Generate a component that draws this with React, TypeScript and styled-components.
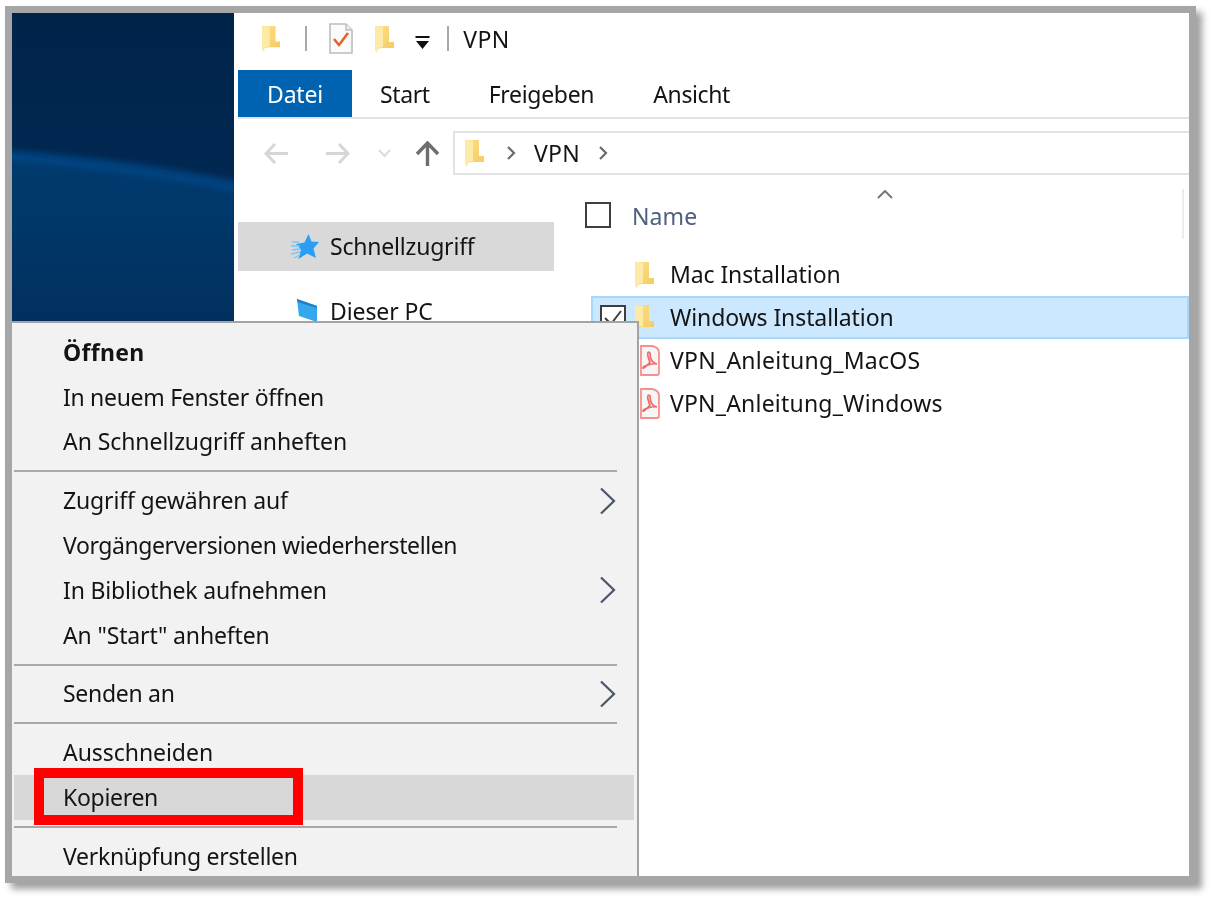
import React from "react";
import styled, { createGlobalStyle } from "styled-components";

const Global = createGlobalStyle`
  html, body { margin: 0; padding: 0; background: #ffffff; }
  body { width: 1211px; height: 899px; overflow: hidden; font-family: "Noto Sans", "Open Sans", sans-serif; }
`;

const Page = styled.div`
  padding: 6px 0 0 5px;
`;

const Frame = styled.div`
  position: relative;
  box-sizing: border-box;
  width: 1191px;
  height: 877px;
  border: 7px solid #a6a6a6;
  display: flex;
  background: #ffffff;
  box-shadow: 6px 6px 7px rgba(0, 0, 0, 0.38);
`;

const Wallpaper = styled.div`
  width: 222px;
  flex: none;
  height: 310px;
  filter: blur(0.5px);
`;

const WallpaperArt = styled.svg`
  display: block;
  width: 100%;
  height: 100%;
`;

const Explorer = styled.div`
  flex: 1;
  min-width: 0;
  display: flex;
  flex-direction: column;
`;

const Label = styled.span<{ $spacing?: number; $color?: string; $bold?: boolean }>`
  font-size: 23px;
  letter-spacing: ${(p) => p.$spacing ?? -0.2}px;
  color: ${(p) => p.$color ?? "#141414"};
  font-weight: ${(p) => (p.$bold ? 700 : 400)};
  white-space: nowrap;
  line-height: 1;
  filter: blur(0.5px);
`;

const TitleBar = styled.div`
  height: 57px;
  display: flex;
  align-items: center;
  padding-left: 28px;
  padding-bottom: 6px;
  box-sizing: border-box;
`;

const TitleText = styled(Label)`
  margin-top: 2px;
`;

const QuickSep = styled.div<{ $left: number; $right: number }>`
  width: 2px;
  height: 25px;
  background: #a8a8a8;
  margin: 0 ${(p) => p.$right}px 0 ${(p) => p.$left}px;
  filter: blur(0.4px);
`;

const IconSlot = styled.span<{ $left?: number; $right?: number; $top?: number }>`
  display: inline-flex;
  flex: none;
  margin-left: ${(p) => p.$left ?? 0}px;
  margin-right: ${(p) => p.$right ?? 0}px;
  margin-top: ${(p) => p.$top ?? 0}px;
  filter: blur(0.5px);
`;

const Tabs = styled.div`
  height: 47px;
  margin-left: 4px;
  display: flex;
  border-bottom: 2px solid #e3e3e3;
`;

const FileTab = styled.div`
  width: 114px;
  background: #0063b1;
  display: flex;
  align-items: center;
  justify-content: center;
  padding-top: 2px;
  box-sizing: border-box;
`;

const Tab = styled.div<{ $left: number }>`
  margin-left: ${(p) => p.$left}px;
  padding-top: 2px;
  display: flex;
  align-items: center;
`;

const AddressRow = styled.div`
  margin-top: 12px;
  height: 44px;
  display: flex;
  align-items: center;
  padding-left: 30px;
  box-sizing: border-box;
`;

const AddressBox = styled.div`
  margin-left: 13px;
  flex: 1;
  height: 44px;
  box-sizing: border-box;
  border: 2px solid #e3e3e3;
  border-right: none;
  display: flex;
  align-items: center;
  padding-left: 10px;
`;

const AddressText = styled(Label)`
  margin-left: 18px;
`;

const Body = styled.div`
  flex: 1;
  display: flex;
  min-height: 0;
`;

const Sidebar = styled.div`
  width: 321px;
  flex: none;
  box-sizing: border-box;
  padding: 47px 1px 0 4px;
`;

const NavItem = styled.div<{ $active?: boolean }>`
  height: 49px;
  margin-bottom: 16px;
  display: flex;
  align-items: center;
  background: ${(p) => (p.$active ? "#d9d9d9" : "transparent")};
  padding-left: 53px;
`;

const Content = styled.div`
  flex: 1;
  min-width: 0;
  position: relative;
  padding-left: 36px;
  padding-top: 14px;
`;

const ColumnHeader = styled.div`
  height: 64px;
  display: flex;
  position: relative;
`;

const Check = styled.div<{ $checked?: boolean }>`
  width: 26px;
  height: 26px;
  box-sizing: border-box;
  border: 2px solid #3f3f3f;
  background: ${(p) => (p.$checked ? "#ffffff" : "transparent")};
  display: flex;
  align-items: center;
  justify-content: center;
  filter: blur(0.4px);
`;

const HeaderCheck = styled(Check)`
  margin: 13px 0 0 -6px;
`;

const HeaderName = styled.div`
  margin: 16px 0 0 21px;
`;

const SortCaret = styled.span`
  position: absolute;
  left: 286px;
  top: 1px;
  display: flex;
  filter: blur(0.4px);
`;

const ColumnDivider = styled.div`
  position: absolute;
  right: 5px;
  top: 0;
  width: 2px;
  height: 50px;
  background: #ececec;
`;

const FileRow = styled.div<{ $selected?: boolean }>`
  height: 43px;
  box-sizing: border-box;
  display: grid;
  grid-template-columns: 44px 35px 1fr;
  align-items: center;
  background: ${(p) => (p.$selected ? "#cce8ff" : "transparent")};
  box-shadow: ${(p) => (p.$selected ? "inset 0 0 0 2px #a6d8ff" : "none")};
`;

const RowCheck = styled(Check)`
  margin-left: 9px;
  margin-top: 1px;
`;

const Menu = styled.div`
  position: absolute;
  left: 0;
  top: 308px;
  width: 627px;
  height: 555px;
  box-sizing: border-box;
  background: #f2f2f2;
  border-top: 2px solid #a3a3a3;
  border-right: 2px solid #a3a3a3;
  padding: 7px 0 0 2px;
  overflow: hidden;
`;

const MenuItem = styled.div<{ $active?: boolean }>`
  height: 44.8px;
  display: flex;
  align-items: center;
  justify-content: space-between;
  box-sizing: border-box;
  padding: 0 18px 0 49px;
  margin-right: 3px;
  background: ${(p) => (p.$active ? "#d8d8d8" : "transparent")};
`;

const MenuSep = styled.div`
  height: 2px;
  margin: 6px 20px 6px 0;
  background: #a9a9a9;
  filter: blur(0.3px);
`;

const RedBox = styled.div`
  position: absolute;
  left: 22px;
  top: 755px;
  width: 269px;
  height: 57px;
  box-sizing: border-box;
  border: 10px solid #ff0000;
`;

const Folder = ({ h = 28 }: { h?: number }) => (
  <svg width={(h * 19) / 28} height={h} viewBox="0 0 19 28">
    <defs>
      <linearGradient id="folderBody" x1="0" y1="0" x2="1" y2="1">
        <stop offset="0" stopColor="#fbe08a" />
        <stop offset="1" stopColor="#f6cb60" />
      </linearGradient>
    </defs>
    <path d="M1 1 H14 V17 H19 V23 H7 L1 24 Z" fill="url(#folderBody)" />
    <path d="M0 0.5 L8 2 V22 L3 23 L2 28 L0 25 Z" fill="#fdeaa6" />
  </svg>
);

const ChecklistPage = () => (
  <svg width="24" height="31" viewBox="0 0 24 31">
    <path d="M1 1 H17 L23 7 V30 H1 Z" fill="#fbfbfb" stroke="#bdbdbd" strokeWidth="1.6" />
    <path d="M17 1 V7 H23" fill="#eeeeee" stroke="#bdbdbd" strokeWidth="1.4" />
    <path d="M5 16 L10 22 L19 10" fill="none" stroke="#e8622c" strokeWidth="2.6" />
  </svg>
);

const QuickDrop = () => (
  <svg width="15" height="13" viewBox="0 0 15 13">
    <rect x="0.5" y="0" width="14" height="2" fill="#111" />
    <path d="M1 5 H14 L7.5 13 Z" fill="#111" />
  </svg>
);

const Arrow = ({ dir, color, w = 25 }: { dir: "l" | "r" | "u"; color: string; w?: number }) => (
  <svg width={w} height={w} viewBox="0 0 25 25" fill="none" stroke={color} strokeWidth="3">
    {dir === "l" && <path d="M24 12.5 H2 M11 3 L2 12.5 L11 22" />}
    {dir === "r" && <path d="M1 12.5 H23 M14 3 L23 12.5 L14 22" />}
    {dir === "u" && <path d="M12.5 25 V3 M2 13 L12.5 2 L23 13" strokeWidth="3.4" />}
  </svg>
);

const SmallChevron = ({ color = "#dcdcdc" }: { color?: string }) => (
  <svg width="13" height="9" viewBox="0 0 13 9" fill="none" stroke={color} strokeWidth="2">
    <path d="M1 1 L6.5 7 L12 1" />
  </svg>
);

const Crumb = () => (
  <svg width="10" height="16" viewBox="0 0 10 16" fill="none" stroke="#6a6a6a" strokeWidth="2.2">
    <path d="M2 2 L8 8 L2 14" />
  </svg>
);

const Star = () => (
  <svg width="28" height="26" viewBox="0 0 28 26">
    <path d="M17.5 0 L20.5 7.5 L28 8 L22.5 14.5 L25 24 L16 19.5 L7.5 25 L10 15.5 L5 10 L13.5 8.5 Z" fill="#2a9df4" />
    <path d="M1 8 L8 8 M0 12 L9 12 M1 16 L9 15 M0 20 L9 18 M3 24 L9 21" stroke="#7cc4f7" strokeWidth="1.3" />
  </svg>
);

const Monitor = () => (
  <svg width="24" height="26" viewBox="0 0 24 26">
    <path d="M3 0 L23 7 V23 L5 17 Z" fill="#35a7ee" />
    <path d="M3 0 L23 7 V9 L3.5 3 Z" fill="#1e7fc6" />
    <path d="M0 24 H20" stroke="#c8c8c8" strokeWidth="2" />
  </svg>
);

const PdfIcon = () => (
  <svg width="20" height="31" viewBox="0 0 20 31">
    <path d="M1 1 H12 Q19 2 19 8 V28 Q19 30 17 30 H1 Z" fill="#f6f6f6" stroke="#f78f8f" strokeWidth="1.8" />
    <path
      d="M9 7 C6 7 9 15 10 17 C7 21 3 24 3 23 C3 21 12 18 17 19 C12 18 10 13 10 8 Z"
      fill="none"
      stroke="#f06a6a"
      strokeWidth="1.7"
    />
  </svg>
);

const Submenu = () => (
  <svg width="17" height="28" viewBox="0 0 17 28" fill="none" stroke="#4a5568" strokeWidth="2.2">
    <path d="M2 1.5 L15 14 L2 26.5" />
  </svg>
);

type Entry = { label: string; spacing: number; bold?: boolean; sub?: boolean; active?: boolean };

const menuGroups: Entry[][] = [
  [
    { label: "Öffnen", bold: true, spacing: 0.3 },
    { label: "In neuem Fenster öffnen", spacing: -0.3 },
    { label: "An Schnellzugriff anheften", spacing: -0.07 },
  ],
  [
    { label: "Zugriff gewähren auf", sub: true, spacing: -0.15 },
    { label: "Vorgängerversionen wiederherstellen", spacing: -0.41 },
    { label: "In Bibliothek aufnehmen", sub: true, spacing: -0.17 },
    { label: 'An "Start" anheften', spacing: -0.15 },
  ],
  [{ label: "Senden an", sub: true, spacing: -0.3 }],
  [
    { label: "Ausschneiden", spacing: -0.05 },
    { label: "Kopieren", active: true, spacing: -0.3 },
  ],
  [{ label: "Verknüpfung erstellen", spacing: -0.3 }],
];

const files = [
  { name: "Mac Installation", kind: "folder", spacing: -0.1 },
  { name: "Windows Installation", kind: "folder", selected: true, spacing: -0.1 },
  { name: "VPN_Anleitung_MacOS", kind: "pdf", spacing: 0.25 },
  { name: "VPN_Anleitung_Windows", kind: "pdf", spacing: 0.2 },
];

export default function App() {
  return (
    <Page>
      <Global />
      <Frame>
        <Wallpaper>
          <WallpaperArt viewBox="0 0 222 310" preserveAspectRatio="none">
            <defs>
              <linearGradient id="sky" x1="0" y1="0" x2="0" y2="1">
                <stop offset="0" stopColor="#01234a" />
                <stop offset="1" stopColor="#012c58" />
              </linearGradient>
              <linearGradient id="sea" x1="0" y1="0" x2="0" y2="1">
                <stop offset="0" stopColor="#013a6e" />
                <stop offset="0.35" stopColor="#00386a" />
                <stop offset="1" stopColor="#02305e" />
              </linearGradient>
              <filter id="soft" x="-10%" y="-100%" width="120%" height="300%">
                <feGaussianBlur stdDeviation="3.5" />
              </filter>
            </defs>
            <rect width="222" height="310" fill="url(#sky)" />
            <path d="M0 142 C70 150 150 160 222 174 V310 H0 Z" fill="url(#sea)" />
            <path
              d="M-5 142 C70 148 150 158 227 174"
              fill="none"
              stroke="#064a8a"
              strokeWidth="8"
              filter="url(#soft)"
            />
          </WallpaperArt>
        </Wallpaper>
        <Explorer>
          <TitleBar>
            <IconSlot>
              <Folder h={27} />
            </IconSlot>
            <QuickSep $left={25} $right={22} />
            <IconSlot $right={22}>
              <ChecklistPage />
            </IconSlot>
            <IconSlot $right={21}>
              <Folder />
            </IconSlot>
            <IconSlot $top={8}>
              <QuickDrop />
            </IconSlot>
            <QuickSep $left={17} $right={14} />
            <TitleText $spacing={0.3}>VPN</TitleText>
          </TitleBar>
          <Tabs>
            <FileTab>
              <Label $color="#ffffff">Datei</Label>
            </FileTab>
            <Tab $left={28}>
              <Label $spacing={-0.4}>Start</Label>
            </Tab>
            <Tab $left={59}>
              <Label $spacing={-0.3}>Freigeben</Label>
            </Tab>
            <Tab $left={59}>
              <Label $spacing={-0.4}>Ansicht</Label>
            </Tab>
          </Tabs>
          <AddressRow>
            <IconSlot>
              <Arrow dir="l" color="#d6d6d6" />
            </IconSlot>
            <IconSlot $left={36}>
              <Arrow dir="r" color="#d6d6d6" />
            </IconSlot>
            <IconSlot $left={28}>
              <SmallChevron />
            </IconSlot>
            <IconSlot $left={24}>
              <Arrow dir="u" color="#6e6e6e" />
            </IconSlot>
            <AddressBox>
              <IconSlot>
                <Folder />
              </IconSlot>
              <IconSlot $left={22}>
                <Crumb />
              </IconSlot>
              <AddressText $spacing={0.3}>VPN</AddressText>
              <IconSlot $left={18}>
                <Crumb />
              </IconSlot>
            </AddressBox>
          </AddressRow>
          <Body>
            <Sidebar>
              <NavItem $active>
                <IconSlot $right={11}>
                  <Star />
                </IconSlot>
                <Label>Schnellzugriff</Label>
              </NavItem>
              <NavItem>
                <IconSlot $left={3} $right={12}>
                  <Monitor />
                </IconSlot>
                <Label $spacing={-0.1}>Dieser PC</Label>
              </NavItem>
            </Sidebar>
            <Content>
              <ColumnHeader>
                <HeaderCheck />
                <HeaderName>
                  <Label $color="#4d6080" $spacing={0.1}>
                    Name
                  </Label>
                </HeaderName>
                <SortCaret>
                  <svg width="16" height="9" viewBox="0 0 16 9" fill="none" stroke="#777" strokeWidth="2">
                    <path d="M1 8 L8 1 L15 8" />
                  </svg>
                </SortCaret>
                <ColumnDivider />
              </ColumnHeader>
              {files.map((f) => (
                <FileRow key={f.name} $selected={f.selected}>
                  {f.selected ? (
                    <RowCheck $checked>
                      <svg width="20" height="18" viewBox="0 0 20 18" fill="none" stroke="#3f3f3f" strokeWidth="2">
                        <path d="M2 9 L8 15 L18 2" />
                      </svg>
                    </RowCheck>
                  ) : (
                    <span />
                  )}
                  <IconSlot $left={f.kind === "pdf" ? 5 : 0}>{f.kind === "pdf" ? <PdfIcon /> : <Folder />}</IconSlot>
                  <Label $spacing={f.spacing}>{f.name}</Label>
                </FileRow>
              ))}
            </Content>
          </Body>
        </Explorer>
        <Menu>
          {menuGroups.map((group, i) => (
            <React.Fragment key={i}>
              {i > 0 && <MenuSep />}
              {group.map((item) => (
                <MenuItem key={item.label} $active={item.active}>
                  <Label $bold={item.bold} $spacing={item.spacing}>
                    {item.label}
                  </Label>
                  {item.sub && (
                    <IconSlot>
                      <Submenu />
                    </IconSlot>
                  )}
                </MenuItem>
              ))}
            </React.Fragment>
          ))}
        </Menu>
        <RedBox />
      </Frame>
    </Page>
  );
}
